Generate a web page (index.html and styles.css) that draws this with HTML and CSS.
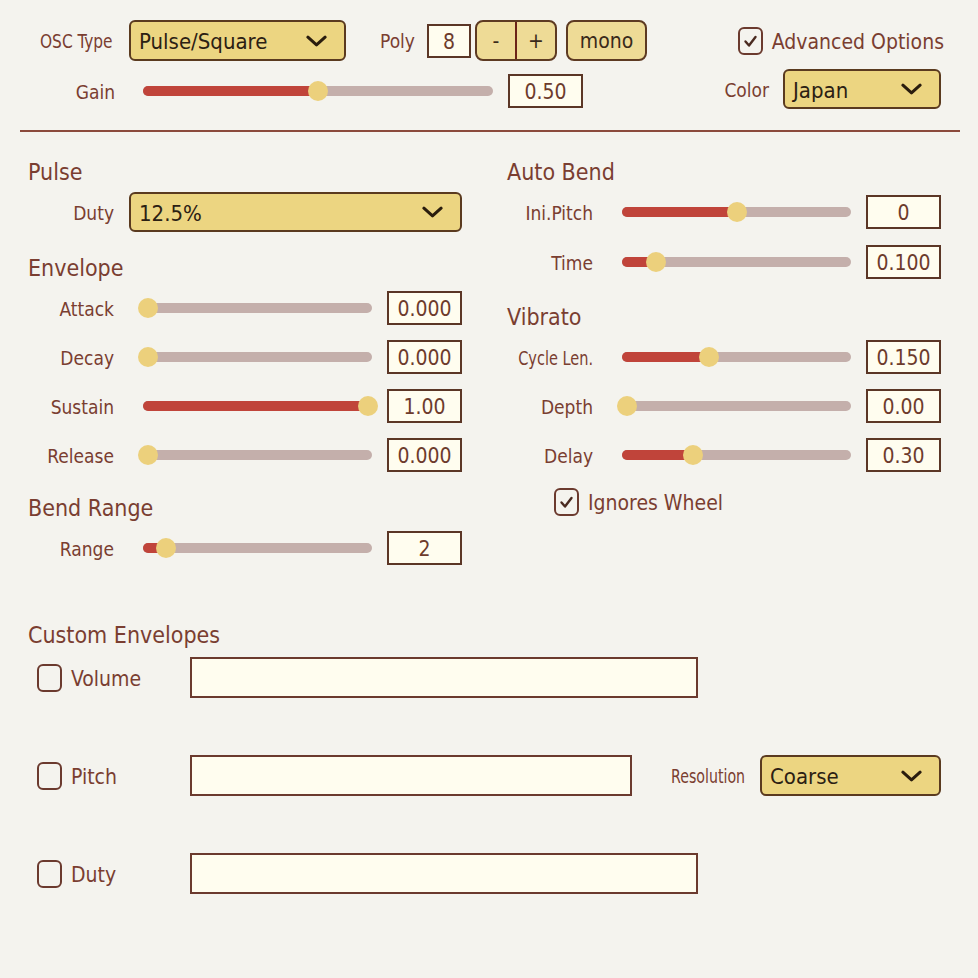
FILE: index.html
```html
<!DOCTYPE html>
<html lang="en">
<head>
<meta charset="utf-8">
<title>Pulse Synth</title>
<link rel="stylesheet" href="styles.css">
</head>
<body>
<div class="app">
  <header class="top">
    <div class="row1">
      <span class="lbl lbl-osc"><span class="sq sq-osc">OSC Type</span></span>
      <div class="select sel-osc"><span class="sel-text">Pulse/Square</span><svg class="chev" viewBox="0 0 22 12"><polyline points="2,2 11,10 20,2"/></svg></div>
      <span class="lbl lbl-poly">Poly</span>
      <div class="num num-poly">8</div>
      <div class="btngroup"><span class="seg seg-minus">-</span><span class="seg">+</span></div>
      <div class="btn mono">mono</div>
      <div class="check check-adv">
        <svg class="box" viewBox="0 0 25 28"><rect x="1" y="1" width="23" height="26" rx="5"/><polyline class="tick" points="7.5,14.5 11,18.5 17.5,10"/></svg>
        <span class="check-text">Advanced Options</span>
      </div>
    </div>
    <div class="row2">
      <span class="lbl lbl-gain">Gain</span>
      <div class="slider slider-gain" style="--v:0.5"><div class="track"><div class="fill"></div></div><div class="thumb"></div></div>
      <div class="num num-gain">0.50</div>
      <span class="lbl lbl-color">Color</span>
      <div class="select sel-color"><span class="sel-text">Japan</span><svg class="chev" viewBox="0 0 22 12"><polyline points="2,2 11,10 20,2"/></svg></div>
    </div>
  </header>

  <div class="divider"></div>

  <main class="cols">
    <section class="col">
      <h2 class="head">Pulse</h2>
      <div class="prow prow-duty">
        <span class="plabel">Duty</span>
        <div class="select sel-duty"><span class="sel-text">12.5%</span><svg class="chev" viewBox="0 0 22 12"><polyline points="2,2 11,10 20,2"/></svg></div>
      </div>

      <h2 class="head head-gap">Envelope</h2>
      <div class="prow">
        <span class="plabel">Attack</span>
        <div class="slider" style="--v:0"><div class="track"><div class="fill"></div></div><div class="thumb"></div></div>
        <div class="num">0.000</div>
      </div>
      <div class="prow">
        <span class="plabel">Decay</span>
        <div class="slider" style="--v:0"><div class="track"><div class="fill"></div></div><div class="thumb"></div></div>
        <div class="num">0.000</div>
      </div>
      <div class="prow">
        <span class="plabel">Sustain</span>
        <div class="slider" style="--v:1"><div class="track"><div class="fill"></div></div><div class="thumb"></div></div>
        <div class="num">1.00</div>
      </div>
      <div class="prow">
        <span class="plabel">Release</span>
        <div class="slider" style="--v:0"><div class="track"><div class="fill"></div></div><div class="thumb"></div></div>
        <div class="num">0.000</div>
      </div>

      <h2 class="head head-gap2">Bend Range</h2>
      <div class="prow">
        <span class="plabel">Range</span>
        <div class="slider" style="--v:0.082"><div class="track"><div class="fill"></div></div><div class="thumb"></div></div>
        <div class="num">2</div>
      </div>
    </section>

    <section class="col">
      <h2 class="head">Auto Bend</h2>
      <div class="prow prow-tall">
        <span class="plabel">Ini.Pitch</span>
        <div class="slider" style="--v:0.5"><div class="track"><div class="fill"></div></div><div class="thumb"></div></div>
        <div class="num">0</div>
      </div>
      <div class="prow prow-tall">
        <span class="plabel">Time</span>
        <div class="slider" style="--v:0.136"><div class="track"><div class="fill"></div></div><div class="thumb"></div></div>
        <div class="num">0.100</div>
      </div>

      <h2 class="head head-gap3">Vibrato</h2>
      <div class="prow">
        <span class="plabel"><span class="sq sq-cycle">Cycle Len.</span></span>
        <div class="slider" style="--v:0.375"><div class="track"><div class="fill"></div></div><div class="thumb"></div></div>
        <div class="num">0.150</div>
      </div>
      <div class="prow">
        <span class="plabel">Depth</span>
        <div class="slider" style="--v:0"><div class="track"><div class="fill"></div></div><div class="thumb"></div></div>
        <div class="num">0.00</div>
      </div>
      <div class="prow">
        <span class="plabel">Delay</span>
        <div class="slider" style="--v:0.3"><div class="track"><div class="fill"></div></div><div class="thumb"></div></div>
        <div class="num">0.30</div>
      </div>
      <div class="check check-wheel">
        <svg class="box" viewBox="0 0 25 28"><rect x="1" y="1" width="23" height="26" rx="5"/><polyline class="tick" points="7.5,14.5 11,18.5 17.5,10"/></svg>
        <span class="check-text">Ignores Wheel</span>
      </div>
    </section>
  </main>

  <section class="custom">
    <h2 class="head">Custom Envelopes</h2>
    <div class="erow erow-first">
      <div class="check check-env">
        <svg class="box" viewBox="0 0 25 28"><rect x="1" y="1" width="23" height="26" rx="5"/></svg>
        <span class="check-text">Volume</span>
      </div>
      <div class="textbox tb-long"></div>
    </div>
    <div class="erow">
      <div class="check check-env">
        <svg class="box" viewBox="0 0 25 28"><rect x="1" y="1" width="23" height="26" rx="5"/></svg>
        <span class="check-text">Pitch</span>
      </div>
      <div class="textbox tb-short"></div>
      <span class="lbl lbl-res"><span class="sq sq-res">Resolution</span></span>
      <div class="select sel-res"><span class="sel-text">Coarse</span><svg class="chev" viewBox="0 0 22 12"><polyline points="2,2 11,10 20,2"/></svg></div>
    </div>
    <div class="erow">
      <div class="check check-env">
        <svg class="box" viewBox="0 0 25 28"><rect x="1" y="1" width="23" height="26" rx="5"/></svg>
        <span class="check-text">Duty</span>
      </div>
      <div class="textbox tb-long"></div>
    </div>
  </section>
</div>
</body>
</html>
```

FILE: styles.css
```css
* { box-sizing: border-box; }

html, body {
  margin: 0;
  padding: 0;
}

body {
  background: #f4f3ee;
  font-family: "DejaVu Sans Condensed", "DejaVu Sans", sans-serif;
  font-stretch: condensed;
  color: #7a3e31;
  width: 978px;
  height: 978px;
  overflow: hidden;
}

.app {
  width: 978px;
}

/* ---------- header ---------- */
.top {
  padding-top: 20px;
}

.row1 {
  display: flex;
  align-items: center;
  height: 41px;
  padding-left: 40px;
  padding-right: 34px;
}

.row2 {
  display: flex;
  align-items: center;
  height: 40px;
  margin-top: 8px;
  padding-left: 40px;
  padding-right: 37px;
}

.lbl {
  font-size: 19px;
  white-space: nowrap;
  line-height: 1;
  padding-top: 2px;
}

/* horizontally squeezed labels */
.sq {
  display: inline-block;
  white-space: nowrap;
}

.lbl-osc {
  width: 75px;
  margin-right: 14px;
  flex: none;
}

.sq-osc {
  transform: scaleX(0.9);
  transform-origin: 0 50%;
}

.lbl-poly {
  margin-left: 34px;
  width: 37px;
}

.lbl-gain {
  width: 75px;
  text-align: right;
  margin-top: 4px;
}

.lbl-color {
  margin-left: auto;
  margin-right: 14px;
}

/* ---------- select ---------- */
.select {
  display: flex;
  align-items: center;
  justify-content: space-between;
  background: #ecd581;
  border: 2px solid #5a3a1f;
  border-radius: 6px;
  color: #2b2013;
  font-size: 22px;
  padding: 0 17px 0 8px;
  white-space: nowrap;
}

.sel-text {
  padding-top: 2px;
}

.chev {
  width: 21px;
  height: 12px;
  flex: none;
}

.chev polyline {
  fill: none;
  stroke: #2a1d0e;
  stroke-width: 3.2;
  stroke-linecap: round;
  stroke-linejoin: round;
}

.sel-osc { width: 217px; height: 41px; }
.sel-color { width: 158px; height: 40px; }
.sel-duty { width: 333px; height: 40px; }
.sel-res { width: 181px; height: 41px; }

/* ---------- number fields ---------- */
.num {
  display: flex;
  align-items: center;
  justify-content: center;
  width: 75px;
  height: 34px;
  padding-top: 2px;
  background: #fffdef;
  border: 2px solid #5b3626;
  color: #6d3b2c;
  font-size: 21px;
  flex: none;
}

.num-poly {
  width: 44px;
  margin-left: 10px;
}

.num-gain {
  margin-left: 15px;
  margin-top: 4px;
}

/* ---------- buttons ---------- */
.btngroup {
  display: flex;
  width: 82px;
  height: 41px;
  margin-left: 4px;
  border: 2px solid #5d3a22;
  border-radius: 8px;
  background: #eedb96;
  overflow: hidden;
}

.seg {
  flex: 1;
  display: flex;
  align-items: center;
  justify-content: center;
  font-size: 21px;
  color: #3a2a1a;
  padding-top: 1px;
}

.seg-minus {
  border-right: 2px solid #6b2318;
}

.btn {
  display: flex;
  align-items: center;
  justify-content: center;
  height: 41px;
  padding-top: 1px;
  border: 2px solid #5d3a22;
  border-radius: 8px;
  background: #eedb96;
  font-size: 21px;
  color: #3a2a1a;
}

.mono {
  width: 81px;
  margin-left: 9px;
}

/* ---------- checkboxes ---------- */
.check {
  display: flex;
  align-items: center;
}

.box {
  width: 25px;
  height: 28px;
  flex: none;
}

.box rect {
  fill: none;
  stroke: #6b3a2e;
  stroke-width: 2;
}

.box .tick {
  fill: none;
  stroke: #4a2a20;
  stroke-width: 2.4;
  stroke-linecap: round;
  stroke-linejoin: round;
}

.check-text {
  margin-left: 9px;
  font-size: 21px;
  white-space: nowrap;
  padding-top: 2px;
}

.check-adv {
  margin-left: auto;
  margin-top: 1px;
}

.check-wheel {
  margin-top: 9px;
  margin-left: 47px;
  height: 28px;
}

/* ---------- divider ---------- */
.divider {
  margin: 21px 0 0 20px;
  width: 940px;
  height: 2px;
  background: #8b4a3c;
}

/* ---------- columns ---------- */
.cols {
  display: grid;
  grid-template-columns: 434px 434px;
  column-gap: 45px;
  padding-left: 28px;
  margin-top: 24px;
  align-items: start;
}

.head {
  margin: 0;
  font-weight: normal;
  font-size: 23px;
  line-height: 31px;
  height: 31px;
  padding-top: 1px;
  color: #7a3e31;
  white-space: nowrap;
}

.head-gap { margin-top: 15px; }
.head-gap2 { margin-top: 13px; }
.head-gap3 { margin-top: 14px; }

.prow {
  display: flex;
  align-items: center;
  height: 49px;
}

.prow-duty {
  height: 50px;
}

.prow-tall {
  height: 50px;
}

.prow-duty .plabel {
  margin-right: 15px;
}

.plabel {
  display: flex;
  justify-content: flex-end;
  width: 86px;
  font-size: 19px;
  white-space: nowrap;
  margin-right: 29px;
  padding-top: 2px;
  flex: none;
}

.sq-cycle {
  transform: scaleX(0.85);
  transform-origin: 100% 50%;
}

/* ---------- slider ---------- */
.slider {
  --w: 229px;
  position: relative;
  width: var(--w);
  height: 20px;
  margin-right: 15px;
  display: flex;
  align-items: center;
  flex: none;
}

.slider-gain {
  --w: 350px;
  margin-left: 28px;
  margin-right: 0;
  margin-top: 4px;
}

.track {
  width: 100%;
  height: 10px;
  border-radius: 5px;
  background: #c4afab;
  overflow: hidden;
}

.fill {
  height: 100%;
  width: calc(4.5px + var(--v) * (var(--w) - 9px));
  background: #c0443a;
}

.thumb {
  position: absolute;
  top: 0;
  left: calc(var(--v) * (var(--w) - 9px) - 5.5px);
  width: 20px;
  height: 20px;
  border-radius: 50%;
  background: #ecd07c;
}

/* ---------- custom envelopes ---------- */
.custom {
  padding-left: 28px;
  margin-top: 47px;
}

.erow {
  display: flex;
  align-items: center;
  height: 41px;
  margin-top: 57px;
}

.erow-first {
  margin-top: 7px;
}

.check-env {
  width: 162px;
  padding-left: 9px;
  flex: none;
}

.textbox {
  height: 41px;
  background: #fffdef;
  border: 2px solid #6b3a2e;
  flex: none;
}

.tb-long { width: 508px; }
.tb-short { width: 442px; }

.lbl-res {
  width: 75px;
  margin-left: 39px;
  margin-right: 14px;
  flex: none;
}

.sq-res {
  transform: scaleX(0.83);
  transform-origin: 0 50%;
}
```
